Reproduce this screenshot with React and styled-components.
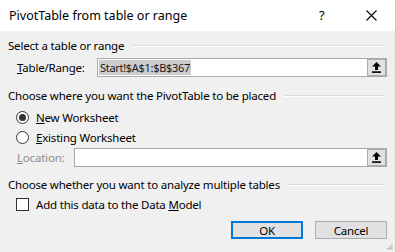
import React from "react";
import styled, { createGlobalStyle } from "styled-components";

const GlobalStyle = createGlobalStyle`
  html, body {
    margin: 0;
    padding: 0;
    background: #ffffff;
  }
  body {
    font-family: "Noto Sans", "Open Sans", sans-serif;
    font-size: 11.5px;
    letter-spacing: -0.2px;
    color: #000;
  }
`;

const UploadIcon = () => (
  <svg width="9" height="11" viewBox="0 0 9 11">
    <path d="M4.5 0 L9 4.5 H6 V8 H3 V4.5 H0 Z" fill="#000" />
    <rect x="0" y="9.3" width="9" height="1.6" fill="#000" />
  </svg>
);

const App = () => {
  return (
    <>
      <GlobalStyle />
      <Dialog>
        <TitleBar>
          <Title>PivotTable from table or range</Title>
          <Help>?</Help>
          <Close>
            <svg width="11" height="11" viewBox="0 0 11 11">
              <path d="M0.5 0.5 L10.5 10.5 M10.5 0.5 L0.5 10.5" stroke="#000" strokeWidth="1.1" />
            </svg>
          </Close>
        </TitleBar>

        <Body>
          <GroupHeader $top={6}>Select a table or range</GroupHeader>
          <FieldRow $top={5}>
            <Label $width={80}>
              <u>T</u>able/Range:
            </Label>
            <RefBox>
              <Selected>Start!$A$1:$B$367</Selected>
              <RefButton>
                <UploadIcon />
              </RefButton>
            </RefBox>
          </FieldRow>

          <GroupHeader $top={10}>Choose where you want the PivotTable to be placed</GroupHeader>
          <OptionRow $top={6}>
            <Radio $checked />
            <span>
              <u>N</u>ew Worksheet
            </span>
          </OptionRow>
          <OptionRow $top={4}>
            <Radio />
            <span>
              <u>E</u>xisting Worksheet
            </span>
          </OptionRow>
          <FieldRow $top={3}>
            <Label $width={57} $disabled>
              <u>L</u>ocation:
            </Label>
            <RefBox>
              <RefButton>
                <UploadIcon />
              </RefButton>
            </RefBox>
          </FieldRow>

          <GroupHeader $top={9}>Choose whether you want to analyze multiple tables</GroupHeader>
          <OptionRow $top={4}>
            <Check />
            <span>
              Add this data to the Data <u>M</u>odel
            </span>
          </OptionRow>

          <Buttons>
            <Button $primary>OK</Button>
            <Button>Cancel</Button>
          </Buttons>
          <Grip>
            <svg width="7" height="7" viewBox="0 0 7 7">
              <rect x="5" y="1" width="1.5" height="1.5" fill="#b8b8b8" />
              <rect x="3" y="3" width="1.5" height="1.5" fill="#b8b8b8" />
              <rect x="5" y="3" width="1.5" height="1.5" fill="#b8b8b8" />
              <rect x="1" y="5" width="1.5" height="1.5" fill="#b8b8b8" />
              <rect x="3" y="5" width="1.5" height="1.5" fill="#b8b8b8" />
              <rect x="5" y="5" width="1.5" height="1.5" fill="#b8b8b8" />
            </svg>
          </Grip>
        </Body>
      </Dialog>
    </>
  );
};

export default App;

const Dialog = styled.div`
  width: 396px;
  height: 252px;
  display: flex;
  flex-direction: column;
  box-sizing: border-box;
  border-right: 1px solid #c8c8c8;
  overflow: hidden;
`;

const TitleBar = styled.div`
  height: 31px;
  flex: none;
  display: flex;
  align-items: center;
  background: #fff;
  padding-left: 9px;
`;

const Title = styled.div`
  flex: 1;
  font-size: 12.5px;
  letter-spacing: 0;
  padding-bottom: 1px;
`;

const Help = styled.div`
  width: 10px;
  font-size: 13px;
  margin-right: 37px;
  padding-bottom: 2px;
`;

const Close = styled.div`
  width: 11px;
  height: 11px;
  margin-right: 18px;
  display: flex;
`;

const Body = styled.div`
  flex: 1;
  background: #f0f0f0;
  padding: 0 8px;
  display: flex;
  flex-direction: column;
  position: relative;
`;

const GroupHeader = styled.div`
  margin-top: ${(p) => p.$top}px;
  height: 16px;
  display: flex;
  align-items: center;
  white-space: nowrap;
  margin-right: 2px;
  &::after {
    content: "";
    flex: 1;
    height: 1px;
    background: #dcdcdc;
    margin-left: 8px;
    box-shadow: 0 1px 0 #fff;
  }
`;

const FieldRow = styled.div`
  margin-top: ${(p) => p.$top}px;
  height: 19px;
  display: flex;
  align-items: center;
  padding-left: 9px;
`;

const Label = styled.div`
  width: ${(p) => p.$width}px;
  flex: none;
  color: ${(p) => (p.$disabled ? "#8d8d8d" : "#000")};
`;

const RefBox = styled.div`
  flex: 1;
  height: 19px;
  box-sizing: border-box;
  border: 1px solid #a9a9a9;
  background: #fff;
  display: flex;
  align-items: center;
  padding-left: 1px;
`;

const Selected = styled.span`
  background: #cccccc;
  color: #1a1a1a;
  font-size: 11px;
  letter-spacing: -0.3px;
  line-height: 15px;
  padding: 0 1px;
`;

const RefButton = styled.div`
  margin-left: auto;
  width: 19px;
  height: 17px;
  box-sizing: border-box;
  border: 1px solid #adadad;
  background: #e1e1e1;
  display: flex;
  align-items: center;
  justify-content: center;
`;

const OptionRow = styled.div`
  margin-top: ${(p) => p.$top}px;
  height: 16px;
  display: flex;
  align-items: center;
  padding-left: 8px;
  gap: 7px;
`;

const Radio = styled.div`
  width: 13px;
  height: 13px;
  box-sizing: border-box;
  border: 1px solid #333;
  border-radius: 50%;
  background: #fff;
  position: relative;
  &::after {
    content: "";
    display: ${(p) => (p.$checked ? "block" : "none")};
    position: absolute;
    left: 2px;
    top: 2px;
    width: 7px;
    height: 7px;
    border-radius: 50%;
    background: #333;
  }
`;

const Check = styled.div`
  width: 13px;
  height: 13px;
  box-sizing: border-box;
  border: 1px solid #333;
  background: #fff;
`;

const Buttons = styled.div`
  margin-top: 9px;
  display: flex;
  justify-content: flex-end;
  gap: 12px;
`;

const Button = styled.div`
  width: 72px;
  height: 18px;
  box-sizing: border-box;
  border: ${(p) => (p.$primary ? "2px solid #0078d7" : "1px solid #adadad")};
  background: #e1e1e1;
  display: flex;
  align-items: center;
  justify-content: center;
`;

const Grip = styled.div`
  position: absolute;
  right: 2px;
  bottom: 2px;
  display: flex;
`;
